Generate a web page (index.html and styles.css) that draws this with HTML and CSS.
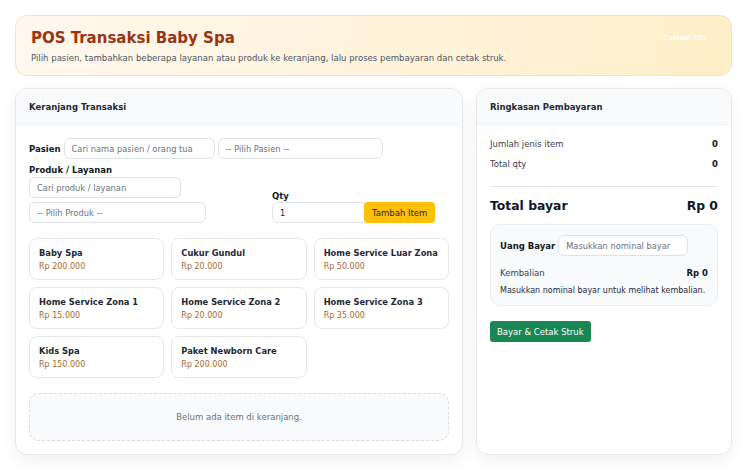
FILE: index.html
```html
<!DOCTYPE html>
<html lang="id">
<head>
<meta charset="utf-8">
<title>POS Transaksi Baby Spa</title>
<link rel="stylesheet" href="styles.css">
</head>
<body>
<div class="page">
  <header class="hero">
    <div class="hero-text">
      <h1>POS Transaksi Baby Spa</h1>
      <p>Pilih pasien, tambahkan beberapa layanan atau produk ke keranjang, lalu proses pembayaran dan cetak struk.</p>
    </div>
    <span class="badge">Custom POS</span>
  </header>

  <div class="main">
    <section class="card cart">
      <div class="card-head">Keranjang Transaksi</div>
      <div class="card-body">
        <div class="row-pasien">
          <label class="lbl">Pasien</label>
          <div class="field w150">Cari nama pasien / orang tua</div>
          <div class="field w164">-- Pilih Pasien --</div>
        </div>
        <div class="row-produk">
          <div class="col-produk">
            <label class="lbl">Produk / Layanan</label>
            <div class="field w151">Cari produk / layanan</div>
            <div class="field w177">-- Pilih Produk --</div>
          </div>
          <div class="col-qty">
            <label class="lbl">Qty</label>
            <div class="qty-group">
              <div class="field qty">1</div>
              <button class="btn-add">Tambah Item</button>
            </div>
          </div>
        </div>
        <div class="grid">
          <div class="item"><div class="name">Baby Spa</div><div class="price">Rp 200.000</div></div>
          <div class="item"><div class="name">Cukur Gundul</div><div class="price">Rp 20.000</div></div>
          <div class="item"><div class="name">Home Service Luar Zona</div><div class="price">Rp 50.000</div></div>
          <div class="item"><div class="name">Home Service Zona 1</div><div class="price">Rp 15.000</div></div>
          <div class="item"><div class="name">Home Service Zona 2</div><div class="price">Rp 20.000</div></div>
          <div class="item"><div class="name">Home Service Zona 3</div><div class="price">Rp 35.000</div></div>
          <div class="item"><div class="name">Kids Spa</div><div class="price">Rp 150.000</div></div>
          <div class="item"><div class="name">Paket Newborn Care</div><div class="price">Rp 200.000</div></div>
        </div>
        <div class="empty">Belum ada item di keranjang.</div>
      </div>
    </section>

    <section class="card summary">
      <div class="card-head">Ringkasan Pembayaran</div>
      <div class="card-body">
        <div class="line"><span>Jumlah jenis item</span><b>0</b></div>
        <div class="line"><span>Total qty</span><b>0</b></div>
        <hr class="sep">
        <div class="total"><span>Total bayar</span><span>Rp 0</span></div>
        <div class="paybox">
          <div class="pay-row">
            <label class="lbl">Uang Bayar</label>
            <div class="field pay">Masukkan nominal bayar</div>
          </div>
          <div class="line change"><span>Kembalian</span><b>Rp 0</b></div>
          <div class="note">Masukkan nominal bayar untuk melihat kembalian.</div>
        </div>
        <button class="btn-pay">Bayar &amp; Cetak Struk</button>
      </div>
    </section>
  </div>
</div>
</body>
</html>
```

FILE: styles.css
```css
* { box-sizing: border-box; }
html, body { margin: 0; padding: 0; background: #ffffff; }
body {
  font-family: "DejaVu Sans", Verdana, sans-serif;
  font-size: 8.5px;
  color: #1f2937;
}
.page { padding: 15px 21px 20px 15px; }

.hero {
  height: 61px;
  border: 1px solid #fbe1b8;
  border-radius: 12px;
  background: linear-gradient(100deg, #fff8ee 0%, #fff3dc 50%, #fdefc7 100%);
  display: flex;
  justify-content: space-between;
  padding: 10px 24px 0 15px;
}
.hero h1 {
  margin: 0;
  font-family: "DejaVu Sans Condensed", "DejaVu Sans", sans-serif;
  font-weight: bold;
  font-size: 16.7px;
  color: #9a3412;
  line-height: 22px;
}
.hero p {
  margin: 4px 0 0;
  font-family: "DejaVu Sans Condensed", "DejaVu Sans", sans-serif;
  font-size: 9.5px;
  color: #4b5563;
}
.badge {
  color: #ffffff;
  font-family: "DejaVu Sans Condensed", sans-serif;
  font-weight: bold;
  font-size: 7px;
  margin-top: 8px;
}

.main {
  display: grid;
  grid-template-columns: 448px 256px;
  gap: 13px;
  margin-top: 12px;
}
.card {
  height: 367px;
  border: 1px solid #e5e7eb;
  border-radius: 12px;
  background: #fff;
  box-shadow: 0 6px 16px rgba(15, 23, 42, 0.06);
  overflow: hidden;
}
.card-head {
  height: 36px;
  background: #f8fafc;
  border-bottom: 1px solid #eef0f3;
  padding: 0 13px;
  display: flex;
  align-items: center;
  font-weight: bold;
  font-size: 8.5px;
  color: #1f2937;
}
.card-body { padding: 13px 13px; }

.lbl { font-weight: bold; font-size: 8.5px; color: #111827; }
.field {
  height: 21px;
  border: 1px solid #dee2e6;
  border-radius: 6px;
  background: #fff;
  display: flex;
  align-items: center;
  padding: 0 7px;
  color: #6b7280;
  font-size: 8.3px;
}
.w150 { width: 151px; }
.w164 { width: 165px; }
.w151 { width: 152px; }
.w177 { width: 177px; }

.row-pasien { display: flex; align-items: center; gap: 3px; }
.row-produk { display: flex; align-items: flex-end; gap: 66px; margin-top: 6px; }
.col-produk { display: flex; flex-direction: column; }
.col-produk .lbl { line-height: 11px; }
.col-produk .w151 { margin-top: 1px; }
.col-produk .w177 { margin-top: 4px; }
.col-qty { display: flex; flex-direction: column; }
.col-qty .lbl { line-height: 10px; margin-bottom: 1px; }
.qty-group { display: flex; }
.qty { width: 93px; border-radius: 6px 0 0 6px; color: #1f2937; }
.btn-add {
  height: 21px;
  border: none;
  border-radius: 4px;
  margin-left: -1px;
  background: #ffc107;
  color: #1f2328;
  font-family: "DejaVu Sans", sans-serif;
  font-size: 8.5px;
  padding: 0 8px;
}

.grid {
  margin-top: 15px;
  display: grid;
  grid-template-columns: repeat(3, 1fr);
  gap: 7px;
}
.item {
  height: 42px;
  border: 1px solid #e5e7eb;
  border-radius: 8px;
  padding: 9px 9px;
}
.name { font-weight: bold; font-size: 8.3px; color: #1f2937; }
.price { margin-top: 4px; font-size: 8px; color: #a8692a; }

.empty {
  margin-top: 15px;
  height: 48px;
  border: 1px dashed #d7dce3;
  border-radius: 10px;
  background: #f8fafc;
  display: flex;
  align-items: center;
  justify-content: center;
  color: #6b7280;
  font-size: 8.5px;
}

.line {
  display: flex;
  justify-content: space-between;
  font-size: 8.5px;
  color: #374151;
  margin-top: 6px;
}
.line:first-child { margin-top: 0; }
.line b { color: #111827; }
.summary .card-body { padding-top: 14px; }
.summary .line + .line { margin-top: 10px; }
.sep { border: 0; border-top: 1px solid #e5e7eb; margin: 17px 0 0; }
.total {
  display: flex;
  justify-content: space-between;
  font-weight: bold;
  font-size: 12.4px;
  color: #111827;
  margin-top: 11px;
}
.paybox {
  margin-top: 11px;
  background: #f8fafc;
  border: 1px solid #e9edf2;
  border-radius: 10px;
  padding: 10px 9px;
  height: 82px;
}
.pay-row { display: flex; align-items: center; gap: 3px; }
.pay { width: 130px; color: #6b7280; }
.change { margin-top: 12px; }
.note { margin-top: 8px; font-size: 8px; color: #1f2937; }
.btn-pay {
  margin-top: 15px;
  height: 21px;
  border: none;
  border-radius: 3px;
  background: #198754;
  color: #fff;
  font-family: "DejaVu Sans", sans-serif;
  font-size: 8.5px;
  padding: 0 7px;
}
```
